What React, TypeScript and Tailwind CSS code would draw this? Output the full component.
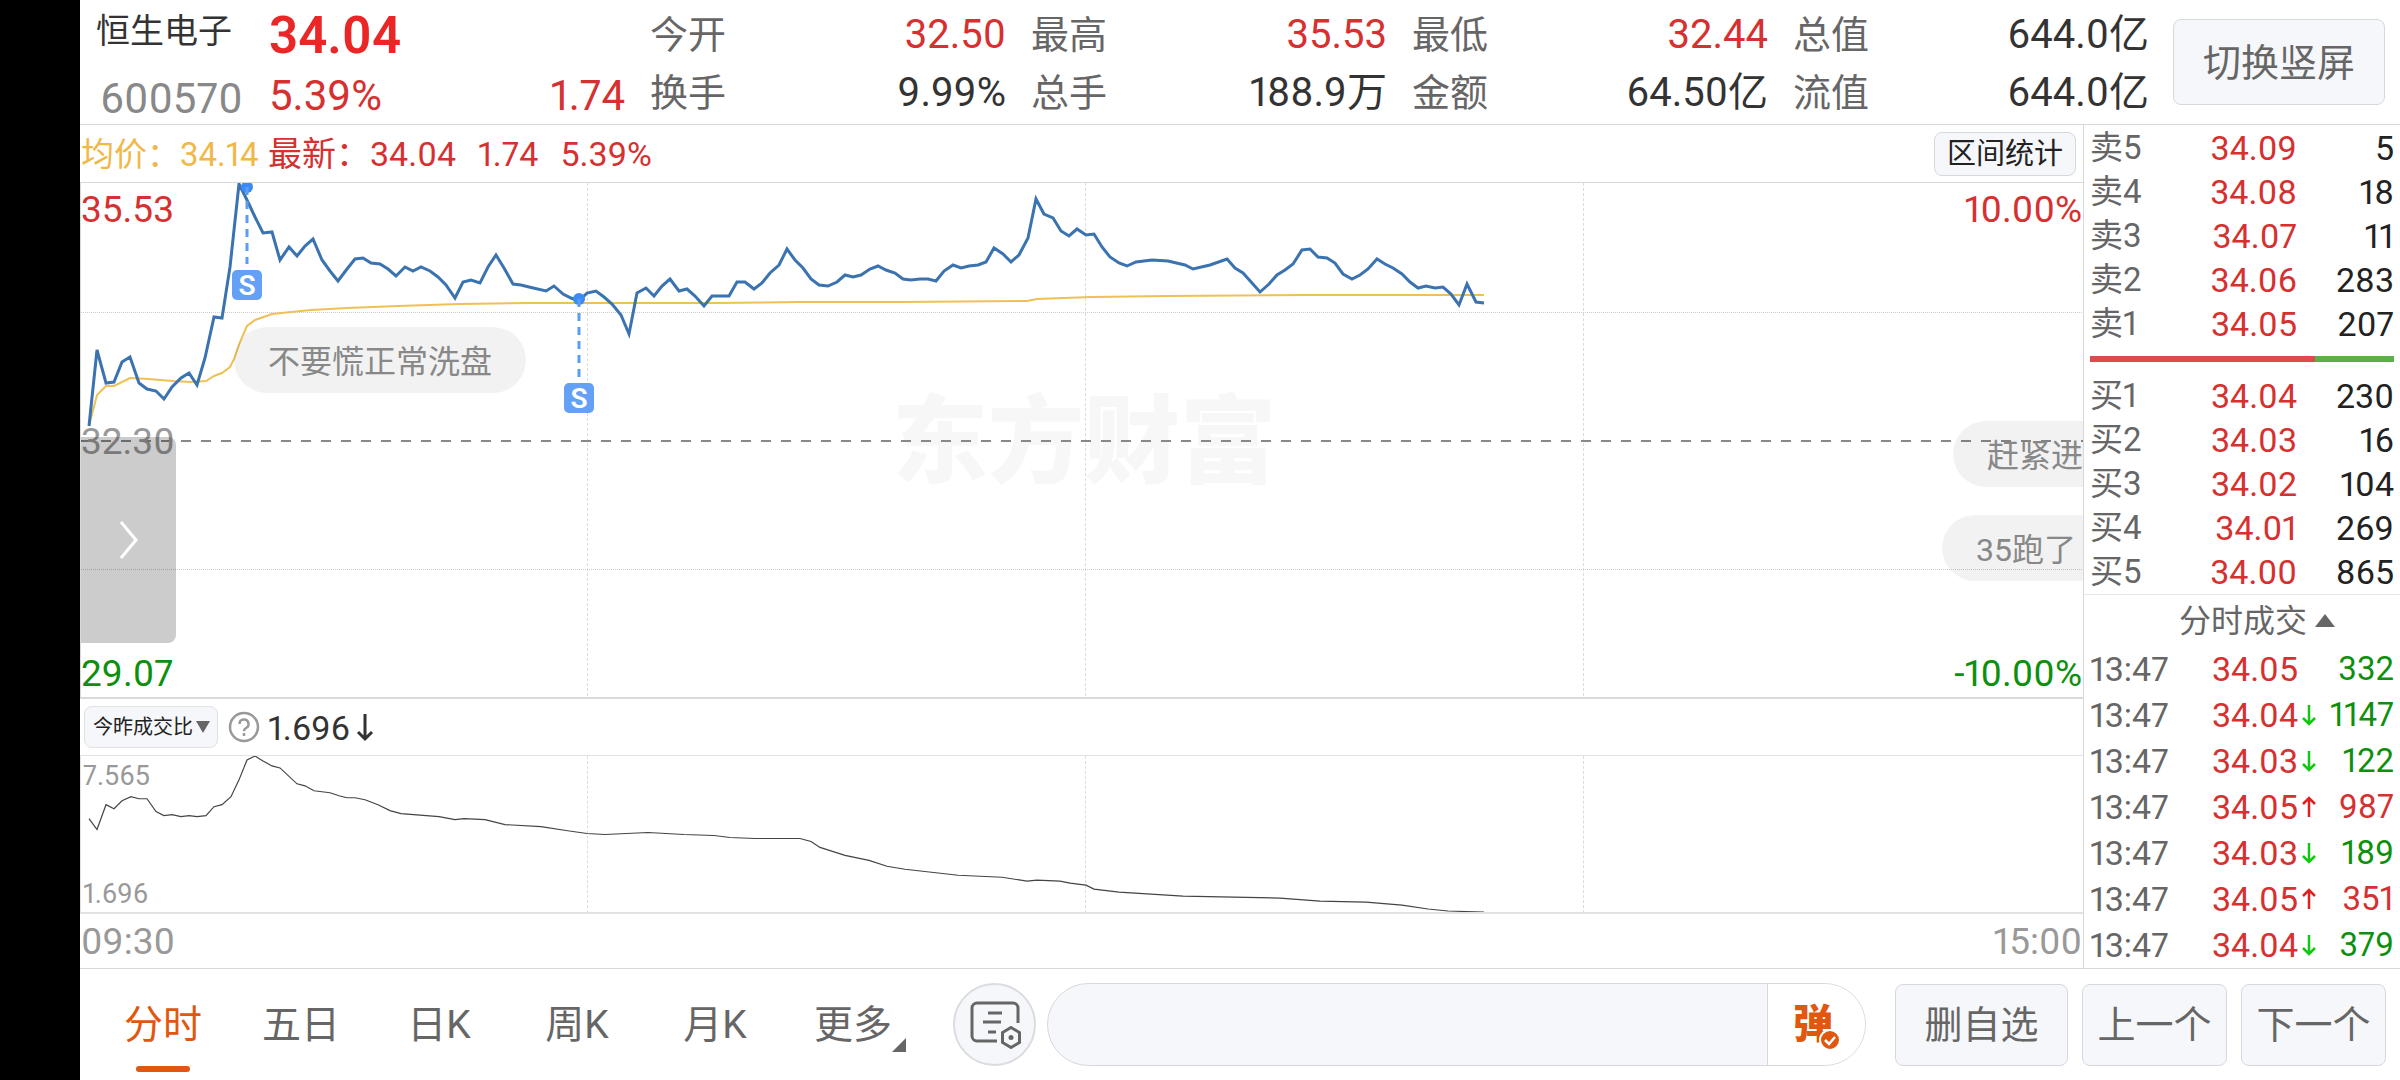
import { ReactNode } from 'react';

const RED = 'text-[#d63030]';
const GREEN = 'text-[#0d900d]';

interface Stat {
  label: string;
  value: string;
  up?: boolean;
}

const stats: Stat[][] = [
  [{ label: '今开', value: '32.50', up: true }, { label: '换手', value: '9.99%' }],
  [{ label: '最高', value: '35.53', up: true }, { label: '总手', value: '188.9万' }],
  [{ label: '最低', value: '32.44', up: true }, { label: '金额', value: '64.50亿' }],
  [{ label: '总值', value: '644.0亿' }, { label: '流值', value: '644.0亿' }],
];

const asks = [
  ['卖5', '34.09', '5'],
  ['卖4', '34.08', '18'],
  ['卖3', '34.07', '11'],
  ['卖2', '34.06', '283'],
  ['卖1', '34.05', '207'],
];

const bids = [
  ['买1', '34.04', '230'],
  ['买2', '34.03', '16'],
  ['买3', '34.02', '104'],
  ['买4', '34.01', '269'],
  ['买5', '34.00', '865'],
];

interface Trade {
  price: string;
  volume: string;
  arrow?: 'up' | 'down';
  buy?: boolean;
}

const trades: Trade[] = [
  { price: '34.05', volume: '332' },
  { price: '34.04', volume: '1147', arrow: 'down' },
  { price: '34.03', volume: '122', arrow: 'down' },
  { price: '34.05', volume: '987', arrow: 'up', buy: true },
  { price: '34.03', volume: '189', arrow: 'down' },
  { price: '34.05', volume: '351', arrow: 'up', buy: true },
  { price: '34.04', volume: '379', arrow: 'down' },
];

const pricePoints =
  '89,426 97,350 106,383 114,382 122,362 130,357 139,383 147,389 156,391 164,399 172,387 181,378 189,373 197,385 205,358 214,317 222,318 230,267 239,184 247,200 255,217 263,233 272,232 280,260 289,247 297,256 305,246 313,239 322,260 330,271 338,281 347,269 355,259 363,258 371,263 380,264 388,269 396,276 405,267 413,271 421,267 430,271 438,277 446,285 455,298 463,282 471,280 480,283 488,267 496,255 504,268 513,284 521,285 529,287 546,291 554,286 563,294 571,298 579,301 587,293 596,291 604,297 612,304 621,315 629,334 637,293 646,288 654,296 662,286 670,279 679,291 687,289 695,296 704,306 712,296 729,296 737,282 745,282 754,289 762,283 770,273 779,265 787,249 795,260 803,268 811,279 819,285 828,286 837,282 845,275 853,277 861,275 870,269 878,266 886,270 895,273 903,279 911,280 920,279 928,279 936,281 944,271 953,265 961,268 969,266 978,265 986,262 994,248 1003,254 1011,262 1019,255 1028,238 1036,199 1044,214 1053,218 1061,231 1069,236 1077,229 1086,235 1094,234 1102,247 1110,257 1119,263 1127,266 1136,262 1152,260 1168,261 1185,265 1193,269 1210,265 1227,259 1235,268 1243,273 1252,283 1260,292 1269,284 1277,275 1285,270 1293,264 1302,250 1310,249 1318,257 1327,258 1335,263 1343,274 1352,279 1360,275 1368,269 1377,259 1385,264 1393,268 1402,274 1410,282 1418,288 1426,286 1435,288 1443,287 1451,294 1459,305 1467,284 1476,302 1484,303';

const averagePoints =
  '89,426 97,395 106,386 114,386 130,378 148,379 173,381 191,382 206,381 214,376 222,373 230,367 234,359 240,342 247,326 255,320 272,314 291,312 311,310 347,308 398,306 459,304 531,303 612,303 714,303 800,302 902,302 1027,301 1037,299 1091,297 1167,296 1310,295 1484,295';

const ratioPoints =
  '89,819 97,830 106,805 114,809 122,801 131,797 139,799 147,799 156,812 164,816 172,815 181,817 189,816 197,817 206,816 214,807 222,805 231,797 239,780 247,760 255,756 263,761 272,766 280,768 297,784 305,786 314,791 330,793 339,796 347,798 355,798 365,800 378,805 390,811 401,814 439,817 455,820 464,819 485,820 505,825 541,827 566,831 587,834 605,835 648,833 684,835 714,836 730,838 755,839 800,839 811,842 820,848 845,856 869,861 887,867 905,870 958,876 1002,878 1027,882 1037,881 1060,882 1070,884 1086,886 1094,890 1119,893 1183,897 1280,899 1320,902 1366,903 1402,906 1428,910 1448,912 1484,913';

const tabs = ['分时', '五日', '日K', '周K', '月K', '更多'];

const TradeArrow = ({ dir }: { dir: 'up' | 'down' }) => (
  <svg
    width="16"
    height="22"
    viewBox="0 0 16 22"
    fill="none"
    strokeWidth="2.5"
    className={dir === 'up' ? 'stroke-[#e02020]' : 'stroke-[#10c810]'}
  >
    <path d={dir === 'up' ? 'M8 21V2M2 8l6-6 6 6' : 'M8 1v19M2 14l6 6 6-6'} />
  </svg>
);

const SellMarker = ({ x, from, to }: { x: number; from: number; to: number }) => (
  <g>
    <circle cx={x} cy={from} r="6" fill="#3b8af5" />
    <path d={`M${x} ${from}V${to}`} stroke="#5b9df5" strokeWidth="3" strokeDasharray="8 6" />
    <rect x={x - 15} y={to + 6} width="30" height="30" rx="5" fill="#64a1f6" />
    <text x={x} y={to + 31} textAnchor="middle" fontSize="28" fontWeight="600" fill="#fff">
      S
    </text>
  </g>
);

const Bubble = ({ className, children }: { className: string; children: ReactNode }) => (
  <div
    className={`absolute h-[66px] rounded-full bg-black/5 px-[34px] pt-0.5 text-[32px] leading-[66px] whitespace-nowrap text-[#888] ${className}`}
  >
    {children}
  </div>
);

const Header = () => (
  <header className="flex h-[125px] items-start border-b border-[#d8d8d8] pr-[15px]">
    <div className="w-[189px] shrink-0 pt-px pl-4 leading-[60px]">
      <h1 className="text-[34px] text-[#333]">恒生电子</h1>
      <p className="mt-2 pl-1 text-[42px] text-[#888]">600570</p>
    </div>
    <div className="grid flex-1 grid-cols-5 gap-x-[25px]">
      <div className="pt-1.5 leading-[60px]">
        <p className="text-[51px] font-semibold text-[#ea2626]">34.04</p>
        <p className={`flex justify-between text-[42px] ${RED}`}>
          <span>5.39%</span>
          <span>1.74</span>
        </p>
      </div>
      {stats.map((column) => (
        <dl key={column[0].label} className="pt-1.5 leading-[58px]">
          {column.map((item) => (
            <div key={item.label} className="flex justify-between">
              <dt className="text-[38px] text-[#666]">{item.label}</dt>
              <dd className={`text-[40px] ${item.up ? RED : 'text-[#333]'}`}>{item.value}</dd>
            </div>
          ))}
        </dl>
      ))}
    </div>
    <button
      type="button"
      className="mt-[19px] ml-6 h-[86px] w-[212px] shrink-0 rounded-lg border border-[#d5d8dc] bg-[#f6f7fa] pt-0.5 text-[38px] text-[#666]"
    >
      切换竖屏
    </button>
  </header>
);

const PriceChart = () => (
  <div className="relative min-h-[515px] flex-1 overflow-hidden border-b-2 border-l border-[#d8dad9]">
    <div className="absolute inset-0 flex items-center justify-center pt-1 pl-1 text-[96px] font-black text-[#f7f7f7]">
      东方财富
    </div>
    <svg
      className="absolute inset-0 h-full w-full"
      viewBox="81 183 2002 514"
      preserveAspectRatio="none"
      fill="none"
    >
      <path d="M587.5 183V697M1085.5 183V697M1583.5 183V697" stroke="#dcdcdc" strokeDasharray="3 2" />
      <path d="M81 312.5H2083M81 569.5H2083" stroke="#cccccc" strokeDasharray="1 1" />
      <path d="M81 441H2083" stroke="#888" strokeWidth="2" strokeDasharray="10 10" />
      <polyline points={averagePoints} stroke="#eec056" strokeWidth="2" />
      <polyline points={pricePoints} stroke="#3a73b0" strokeWidth="3" />
      <SellMarker x={247} from={187} to={264} />
      <SellMarker x={579} from={299} to={377} />
    </svg>
    <Bubble className="top-[144px] left-[153px]">不要慌正常洗盘</Bubble>
    <Bubble className="top-[238px] left-[1872px]">赶紧进</Bubble>
    <Bubble className="top-[332px] left-[1861px]">35跑了</Bubble>
    <div className="absolute inset-0 flex flex-col justify-between pt-1 pr-px text-[37px] leading-[46px]">
      <p className={`flex justify-between ${RED}`}>
        <span>35.53</span>
        <span>10.00%</span>
      </p>
      <p className="text-[#999]">32.30</p>
      <p className={`flex justify-between ${GREEN}`}>
        <span>29.07</span>
        <span>-10.00%</span>
      </p>
    </div>
    <button
      type="button"
      aria-label="展开"
      className="absolute top-[254px] left-0 flex h-[206px] w-[95px] items-center justify-center rounded-r-lg bg-black/20"
    >
      <svg width="20" height="40" viewBox="0 0 20 40" fill="none" stroke="#fff" strokeWidth="3">
        <path d="M2 2l15 18L2 38" />
      </svg>
    </button>
  </div>
);

const RatioChart = () => (
  <div className="relative h-[159px] border-t border-b-2 border-l border-[#e2e2e2]">
    <svg
      className="absolute inset-0 h-full w-full"
      viewBox="81 756 2002 157"
      preserveAspectRatio="none"
      fill="none"
    >
      <path d="M587.5 756V913M1085.5 756V913M1583.5 756V913" stroke="#dcdcdc" strokeDasharray="3 2" />
      <polyline points={ratioPoints} stroke="#444" strokeWidth="1.2" />
    </svg>
    <div className="absolute inset-0 flex flex-col justify-between pt-0.5 pl-0.5 text-[27px] leading-[36px] text-[#999]">
      <span>7.565</span>
      <span>1.696</span>
    </div>
  </div>
);

const Charts = () => (
  <section className="flex min-w-0 flex-1 flex-col">
    <div className="flex h-[58px] items-center border-b border-[#d8d8d8] pr-[7px] pl-px text-[33px]">
      <span className="w-[187px] pt-0.5 whitespace-nowrap text-[#f0b848]">均价：34.14</span>
      <span className={`flex gap-[22px] pt-0.5 text-[34px] ${RED}`}>
        <span>最新：34.04</span>
        <span>1.74</span>
        <span>5.39%</span>
      </span>
      <button
        type="button"
        className="ml-auto h-11 w-[142px] rounded-lg border border-[#d5d8dc] bg-[#f6f7fa] text-[29px] text-[#222]"
      >
        区间统计
      </button>
    </div>
    <PriceChart />
    <div className="flex h-14 items-center pl-1">
      <label className="relative flex items-center">
        <select
          aria-label="指标"
          className="h-[42px] w-[134px] appearance-none rounded-lg border border-[#dfe1e4] bg-[#f6f7fa] pl-2 text-[20px] text-[#222]"
        >
          <option>今昨成交比</option>
        </select>
        <svg className="pointer-events-none absolute right-2" width="14" height="12" viewBox="0 0 14 12">
          <path d="M0 0h14L7 12z" fill="#666" />
        </svg>
      </label>
      <button type="button" aria-label="说明" className="ml-2.5">
        <svg width="32" height="32" viewBox="0 0 32 32" fill="none" stroke="#999" strokeWidth="2.5">
          <circle cx="16" cy="16" r="14" />
          <path d="M11.5 13a4.5 4.5 0 1 1 6.500 4c-1.5.8-2 1.5-2 3.200" />
          <path d="M16 22v3" />
        </svg>
      </button>
      <span className="ml-2 pt-0.5 text-[34px] text-[#333]">1.696</span>
      <svg className="ml-1.5" width="18" height="30" viewBox="0 0 18 30" fill="none" stroke="#333" strokeWidth="3">
        <path d="M9 2v25M2 20l7 7 7-7" />
      </svg>
    </div>
    <RatioChart />
    <div className="flex h-[54px] items-center justify-between px-px pt-0.5 text-[37px] text-[#999]">
      <span>09:30</span>
      <span>15:00</span>
    </div>
  </section>
);

const QuoteTable = ({ rows }: { rows: string[][] }) => (
  <table className="w-full table-fixed text-[34px] leading-[44px]">
    <tbody>
      {rows.map(([label, price, volume]) => (
        <tr key={label} className="h-11">
          <th className="w-[68px] p-0 text-left text-[33px] font-normal text-[#666]">{label}</th>
          <td className={`p-0 text-right ${RED}`}>{price}</td>
          <td className="w-[97px] p-0 text-right text-[#222]">{volume}</td>
        </tr>
      ))}
    </tbody>
  </table>
);

const OrderBook = () => (
  <aside className="w-[317px] shrink-0 border-l border-[#d8d8d8]">
    <div className="border-b border-[#e6e6e6] px-1.5 pt-px">
      <QuoteTable rows={asks} />
      <div className="mt-2.5 mb-3 flex h-1.5">
        <div className="bg-[#dc4c4c]" style={{ width: '74%' }} />
        <div className="flex-1 bg-[#5bb04a]" />
      </div>
      <QuoteTable rows={bids} />
    </div>
    <button
      type="button"
      className="flex h-[51px] w-full items-center justify-center gap-2 pl-[30px] text-[32px] text-[#666]"
    >
      分时成交
      <svg width="20" height="13" viewBox="0 0 20 13">
        <path d="M10 0l10 13H0z" fill="#666" />
      </svg>
    </button>
    <table className="w-full table-fixed text-[34px] leading-[46px]">
      <tbody>
        {trades.map((trade, index) => (
          <tr key={index} className="h-[46px]">
            <td className="w-[90px] p-0 pl-1.5 text-[#666]">13:47</td>
            <td className={`p-0 text-right ${RED}`}>{trade.price}</td>
            <td className="w-5 p-0 pl-[3px]">{trade.arrow && <TradeArrow dir={trade.arrow} />}</td>
            <td className={`w-[82px] p-0 pr-1.5 text-right text-[33px] ${trade.buy ? RED : GREEN}`}>{trade.volume}</td>
          </tr>
        ))}
      </tbody>
    </table>
  </aside>
);

const Footer = () => (
  <footer className="flex h-28 items-center border-t border-[#d8d8d8] px-3.5 text-[#666]">
    <nav className="flex h-full">
      {tabs.map((tab, index) => (
        <button
          key={tab}
          type="button"
          className={`relative flex h-full w-[138px] items-center justify-center pt-0.5 text-[39px] ${index === 0 ? 'text-[#e0570f]' : ''}`}
        >
          {tab}
          {index === 0 && <span className="absolute bottom-2 h-1.5 w-[54px] rounded-full bg-[#e0570f]" />}
          {index === tabs.length - 1 && (
            <svg className="absolute right-4 bottom-7" width="14" height="14" viewBox="0 0 14 14">
              <path d="M14 0v14H0z" fill="#666" />
            </svg>
          )}
        </button>
      ))}
    </nav>
    <button
      type="button"
      aria-label="设置"
      className="ml-[31px] flex size-[83px] shrink-0 items-center justify-center rounded-full border-2 border-[#dadce0] bg-[#f6f7fa]"
    >
      <svg width="52" height="48" viewBox="0 0 52 48" fill="none" stroke="#666" strokeWidth="3">
        <path d="M28 40H8a5 5 0 0 1-5-5V7a5 5 0 0 1 5-5h36a5 5 0 0 1 5 5v15" />
        <path d="M19 12h14M14 21h18M19 31h8" />
        <path d="M42 26.5l8.500 5v10l-8.500 5-8.500-5v-10z" />
        <circle cx="42" cy="36.5" r="2.5" fill="#666" stroke="none" />
      </svg>
    </button>
    <div className="ml-[11px] flex h-[83px] min-w-0 flex-1 overflow-hidden rounded-full border border-[#d5d8dc] bg-[#f6f7fa]">
      <input type="text" aria-label="发弹幕" className="min-w-0 flex-1 px-10 text-[34px] outline-none" />
      <button
        type="button"
        className="flex w-[98px] items-center border-l border-[#d5d8dc] bg-white pl-[25px] text-[40px] font-black text-[#e0570f]"
      >
        <span className="relative">
          弹
          <svg className="absolute -right-2 bottom-1" width="22" height="22" viewBox="0 0 22 22">
            <circle cx="11" cy="11" r="10" fill="#e0570f" stroke="#fff" strokeWidth="2" />
            <path d="M6 11l4 4 6-7" fill="none" stroke="#fff" strokeWidth="2.5" />
          </svg>
        </span>
      </button>
    </div>
    <div className="ml-[29px] flex shrink-0 gap-3.5 text-[38px]">
      <button type="button" className="h-[82px] w-[173px] rounded-lg border border-[#d5d8dc] bg-[#f6f7fa] pt-0.5">
        删自选
      </button>
      <button type="button" className="h-[82px] w-[145px] rounded-lg border border-[#d5d8dc] bg-[#f6f7fa] pt-0.5">
        上一个
      </button>
      <button type="button" className="h-[82px] w-[145px] rounded-lg border border-[#d5d8dc] bg-[#f6f7fa] pt-0.5">
        下一个
      </button>
    </div>
  </footer>
);

export default function App() {
  return (
    <div className="min-h-screen bg-black pl-20 font-[Roboto,'Noto_Sans_CJK_SC',sans-serif] proportional-nums">
      <div className="flex min-h-screen flex-col bg-white">
        <Header />
        <main className="flex flex-1">
          <Charts />
          <OrderBook />
        </main>
        <Footer />
      </div>
    </div>
  );
}
